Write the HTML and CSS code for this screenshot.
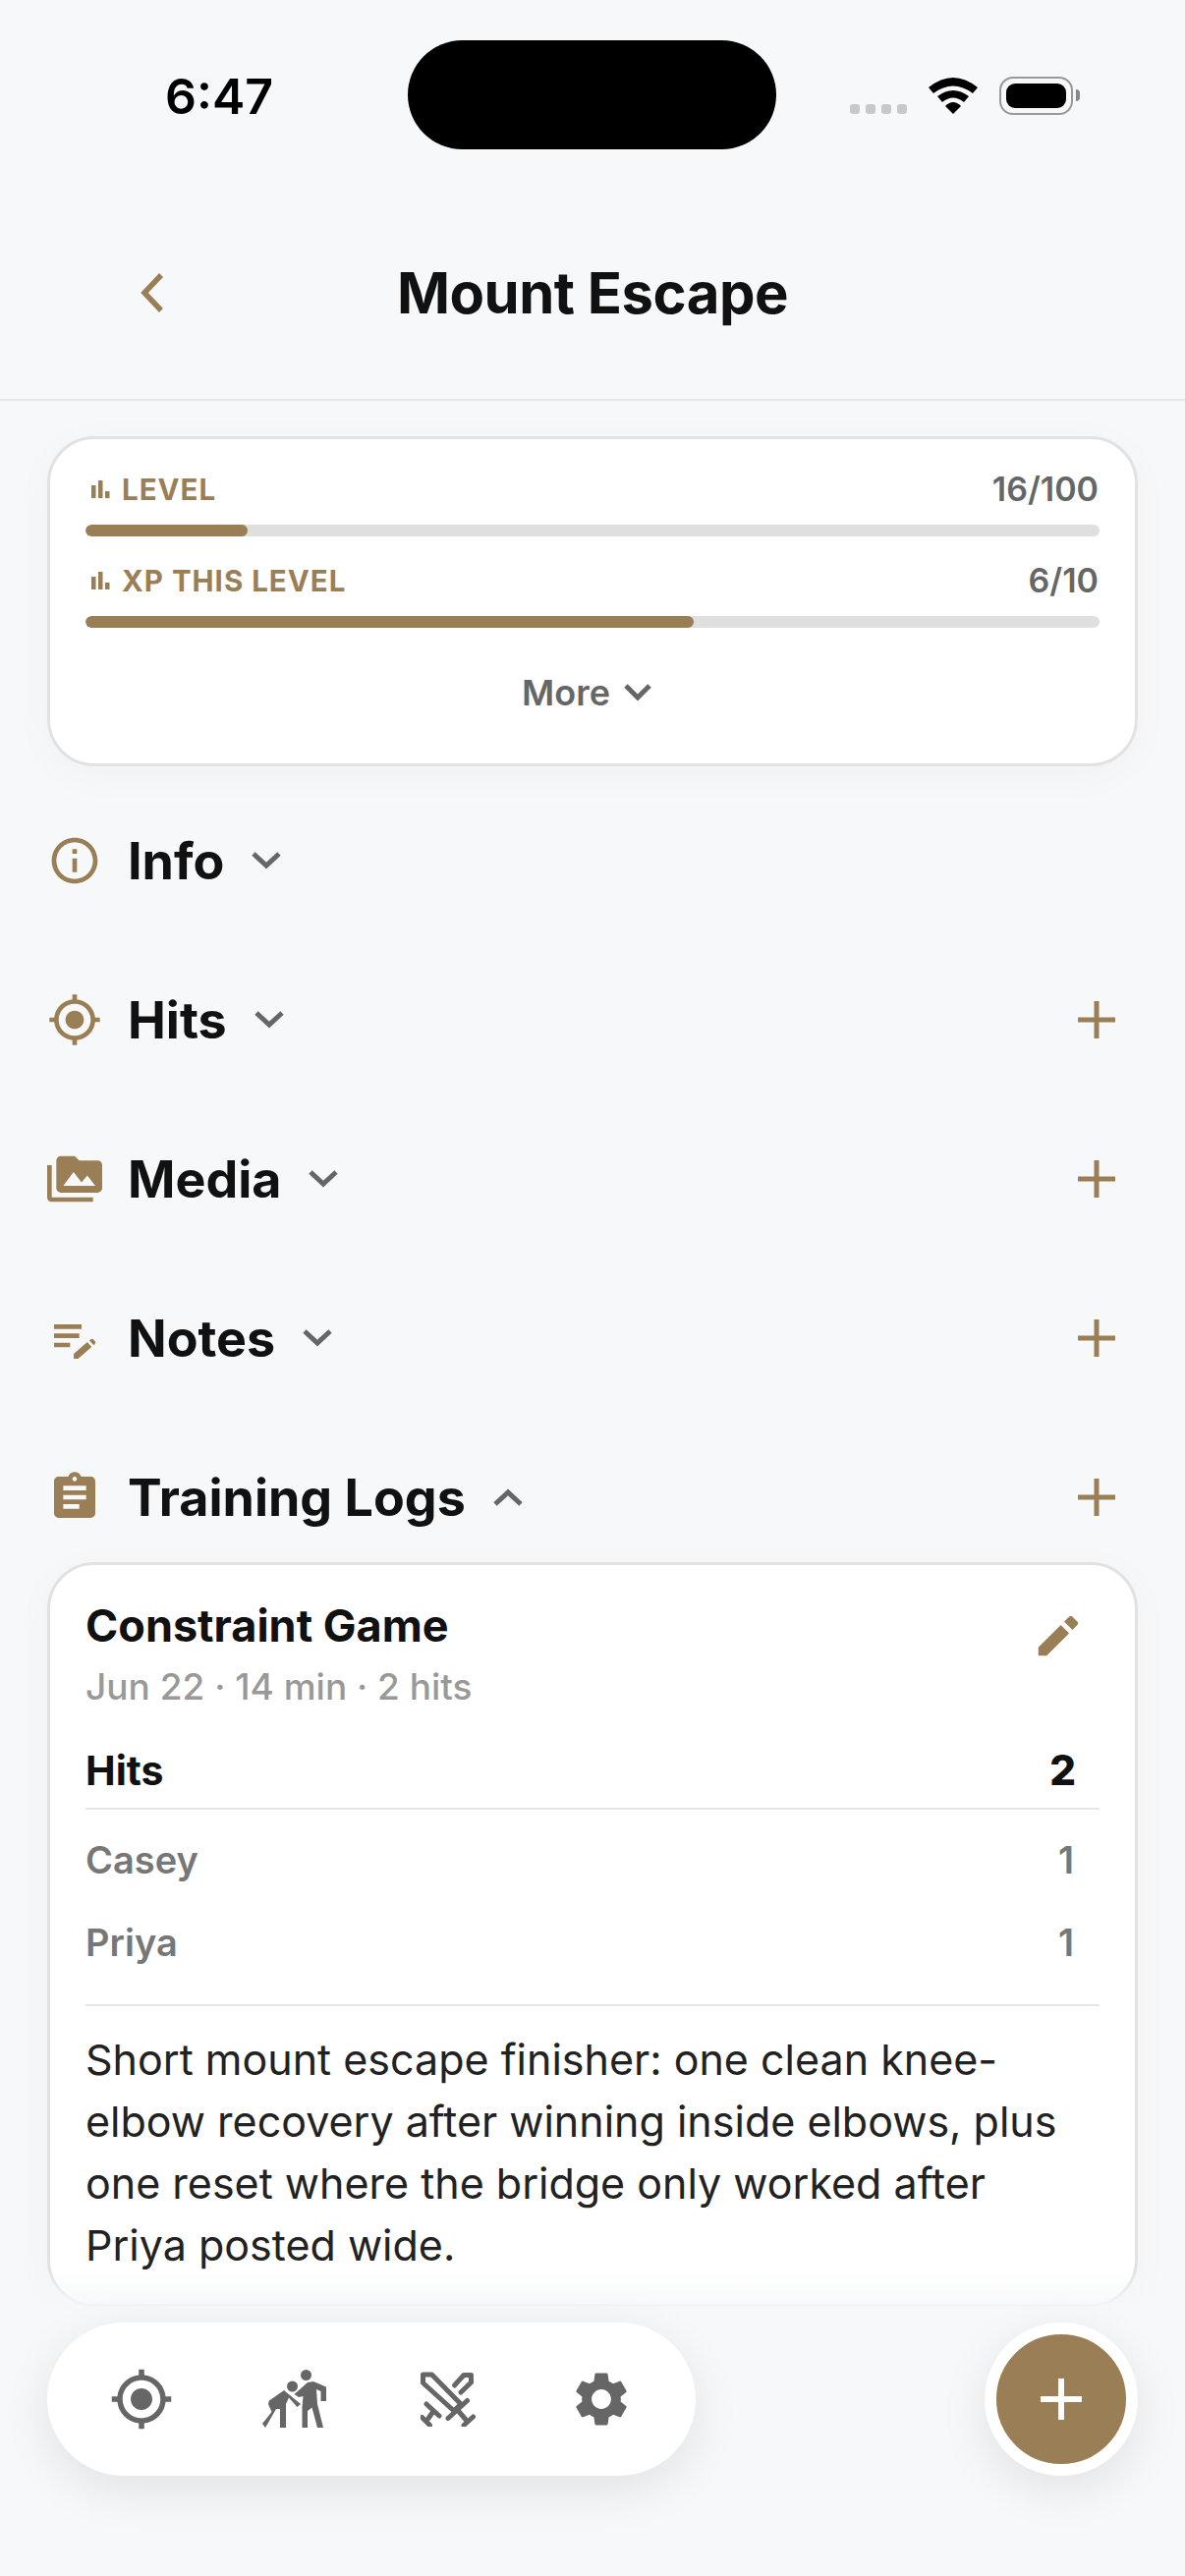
FILE: index.html
```html
<!DOCTYPE html>
<html lang="en">
<head>
    <meta charset="UTF-8">
    <meta name="viewport" content="width=device-width, initial-scale=1.0">
    <title>Mount Escape</title>
    <link rel="stylesheet" href="styles.css">
</head>
<body>
    <div class="status-bar">
        <div class="status-time">6:47</div>
        <div class="island"></div>
        <div class="status-icons">
            <div class="signal"><span></span><span></span><span></span><span></span></div>
            <svg class="wifi" width="50" height="37" viewBox="0 0 50 37"><path d="M0 10Q25-10 50 10L45 16Q25 1 5 16Z"/><path d="M9 19Q25 7 41 19L36 25Q25 16 14 25Z"/><path d="M17 29Q25 21 33 29L25 37Z"/></svg>
            <div class="battery"><div class="battery-fill"></div></div>
            <div class="battery-nub"></div>
        </div>
    </div>

    <header class="top-bar">
        <svg class="back" width="26" height="40" viewBox="0 0 26 40"><path d="M22 2 5 20l17 18"/></svg>
        <h1>Mount Escape</h1>
        <div></div>
    </header>

    <main class="content">
        <section class="card stats">
            <div class="stat-row">
                <span class="stat-label"><svg width="30" height="20" viewBox="0 0 30 20"><rect x="6" y="6" width="4.5" height="13"/><rect x="13" y="1" width="4.5" height="18"/><rect x="20" y="12" width="4.5" height="7"/></svg>LEVEL</span>
                <span class="stat-value">16/100</span>
            </div>
            <div class="bar"><div class="bar-fill" style="width: 16%"></div></div>
            <div class="stat-row second">
                <span class="stat-label"><svg width="30" height="20" viewBox="0 0 30 20"><rect x="6" y="6" width="4.5" height="13"/><rect x="13" y="1" width="4.5" height="18"/><rect x="20" y="12" width="4.5" height="7"/></svg>XP THIS LEVEL</span>
                <span class="stat-value">6/10</span>
            </div>
            <div class="bar"><div class="bar-fill" style="width: 60%"></div></div>
            <div class="more">More <svg width="28" height="18" viewBox="0 0 28 18"><path d="M2 2l12 12L26 2"/></svg></div>
        </section>

        <div class="sections">
            <div class="section-row">
                <svg class="section-icon" viewBox="0 0 24 24"><path d="M11 7h2v2h-2zm0 4h2v6h-2zm1-9C6.48 2 2 6.48 2 12s4.48 10 10 10 10-4.48 10-10S17.52 2 12 2zm0 18c-4.41 0-8-3.59-8-8s3.59-8 8-8 8 3.59 8 8-3.59 8-8 8z"/></svg>
                <h2>Info</h2>
                <svg class="caret" width="30" height="18" viewBox="0 0 30 18"><path d="M2 2l13 12L28 2"/></svg>
            </div>
            <div class="section-row">
                <svg class="section-icon" viewBox="0 0 24 24"><path d="M12 8c-2.21 0-4 1.79-4 4s1.79 4 4 4 4-1.79 4-4-1.79-4-4-4zm8.94 3A8.994 8.994 0 0 0 13 3.06V1h-2v2.06A8.994 8.994 0 0 0 3.06 11H1v2h2.06A8.994 8.994 0 0 0 11 20.94V23h2v-2.06A8.994 8.994 0 0 0 20.94 13H23v-2h-2.06zM12 19c-3.87 0-7-3.13-7-7s3.13-7 7-7 7 3.13 7 7-3.13 7-7 7z"/></svg>
                <h2>Hits</h2>
                <svg class="caret" width="30" height="18" viewBox="0 0 30 18"><path d="M2 2l13 12L28 2"/></svg>
                <svg class="add" width="40" height="40" viewBox="0 0 40 40"><path d="M20 1v38M1 20h38"/></svg>
            </div>
            <div class="section-row">
                <svg class="section-icon" viewBox="0 0 24 24"><path d="M2 6H0v14c0 1.1.9 2 2 2h18v-2H2V6zm20-2h-8l-2-2H6c-1.1 0-1.99.9-1.99 2L4 16c0 1.1.9 2 2 2h16c1.1 0 2-.9 2-2V6c0-1.1-.9-2-2-2zM7 15l4.5-6 3.5 4.51 2.5-3.01L21 15H7z"/></svg>
                <h2>Media</h2>
                <svg class="caret" width="30" height="18" viewBox="0 0 30 18"><path d="M2 2l13 12L28 2"/></svg>
                <svg class="add" width="40" height="40" viewBox="0 0 40 40"><path d="M20 1v38M1 20h38"/></svg>
            </div>
            <div class="section-row">
                <svg class="section-icon" viewBox="0 0 24 24"><path d="M3 10h11v2H3zM3 6h12v2H3zM3 14h7v2H3zM11.6 21h1.9l5.9-5.1-1.9-2.2-5.9 5.2zM20.3 15.1l.5-.5c.4-.4.4-.9 0-1.3l-.6-.7c-.4-.4-.9-.4-1.3 0l-.5.5z"/></svg>
                <h2>Notes</h2>
                <svg class="caret" width="30" height="18" viewBox="0 0 30 18"><path d="M2 2l13 12L28 2"/></svg>
                <svg class="add" width="40" height="40" viewBox="0 0 40 40"><path d="M20 1v38M1 20h38"/></svg>
            </div>
            <div class="section-row">
                <svg class="section-icon" viewBox="0 0 24 24"><path d="M19 3h-4.18C14.4 1.84 13.3 1 12 1c-1.3 0-2.4.84-2.82 2H5c-1.1 0-2 .9-2 2v14c0 1.1.9 2 2 2h14c1.1 0 2-.9 2-2V5c0-1.1-.9-2-2-2zm-7 0c.55 0 1 .45 1 1s-.45 1-1 1-1-.45-1-1 .45-1 1-1zm2 14H7v-2h7v2zm3-4H7v-2h10v2zm0-4H7V7h10v2z"/></svg>
                <h2>Training Logs</h2>
                <svg class="caret" width="30" height="18" viewBox="0 0 30 18"><path d="M2 16L15 4l13 12"/></svg>
                <svg class="add" width="40" height="40" viewBox="0 0 40 40"><path d="M20 1v38M1 20h38"/></svg>
            </div>
        </div>

        <article class="card log">
            <div class="log-head">
                <h3>Constraint Game</h3>
                <svg class="log-edit" width="54" height="54" viewBox="0 0 24 24"><path d="M3 17.25V21h3.75L16.9 10.85l-3.75-3.75L3 17.25zM20.71 7.04c.39-.39.39-1.02 0-1.41l-2.34-2.34c-.39-.39-1.02-.39-1.41 0l-2.3 2.3 3.75 3.75 2.3-2.3z"/></svg>
            </div>
            <div class="log-meta">Jun 22 · 14 min · 2 hits</div>
            <div class="hits-total"><span>Hits</span><span class="hits-count">2</span></div>
            <div class="hits-list">
                <div class="hit-row"><span>Casey</span><span>1</span></div>
                <div class="hit-row"><span>Priya</span><span>1</span></div>
            </div>
            <p class="log-text">Short mount escape finisher: one clean knee-elbow recovery after winning inside elbows, plus one reset where the bridge only worked after Priya posted wide.</p>
        </article>
    </main>

    <div class="fade"></div>

    <nav class="dock">
        <svg class="tab" width="66" height="66" viewBox="0 0 24 24"><path d="M12 8c-2.21 0-4 1.79-4 4s1.79 4 4 4 4-1.79 4-4-1.79-4-4-4zm8.94 3A8.994 8.994 0 0 0 13 3.06V1h-2v2.06A8.994 8.994 0 0 0 3.06 11H1v2h2.06A8.994 8.994 0 0 0 11 20.94V23h2v-2.06A8.994 8.994 0 0 0 20.94 13H23v-2h-2.06zM12 19c-3.87 0-7-3.13-7-7s3.13-7 7-7 7 3.13 7 7-3.13 7-7 7z"/></svg>
        <svg class="tab" width="66" height="60" viewBox="0 0 66 60"><circle cx="44.5" cy="5.5" r="5.5"/><circle cx="30.5" cy="17" r="5.5"/><path d="M46 13 52 12 65 17.5V32H59.5V22L55 20 56 35 62 59H56L50.5 38.5 46 42V59H40.5V38L41.5 27 37 28 32.5 25Z"/><path d="M22 21 39 35 35.5 38 27 28.5 24 35V59H18V40H14L3 59 0 55 9.5 43 6 35 7 31.5Z"/></svg>
        <svg class="tab swords" width="56" height="56" viewBox="0 0 56 56"><path d="M2.5 3H11.5L41 33 34 40 2.5 11.5Z"/><path d="M28 47.5 47.5 29.5M38 39.5 47.5 50.5M44 54.5 53.5 46"/><path d="M34.5 14 44 3.5H51.5V11L41 21"/><path d="M6 33 19 45M12.5 41 8 47.5M1.5 46.5 9.5 54.5"/></svg>
        <svg class="tab" width="66" height="66" viewBox="0 0 24 24"><path d="M19.14 12.94c.04-.3.06-.61.06-.94 0-.32-.02-.64-.07-.94l2.03-1.58a.49.49 0 0 0 .12-.61l-1.92-3.32a.488.488 0 0 0-.59-.22l-2.39.96c-.5-.38-1.03-.7-1.62-.94l-.36-2.54a.484.484 0 0 0-.48-.41h-3.84c-.24 0-.43.17-.47.41l-.36 2.54c-.59.24-1.13.57-1.62.94l-2.39-.96c-.22-.08-.47 0-.59.22L2.74 8.87c-.12.21-.08.47.12.61l2.03 1.58c-.05.3-.09.63-.09.94s.02.64.07.94l-2.03 1.58a.49.49 0 0 0-.12.61l1.92 3.32c.12.22.37.29.59.22l2.39-.96c.5.38 1.03.7 1.62.94l.36 2.54c.05.24.24.41.48.41h3.84c.24 0 .44-.17.47-.41l.36-2.54c.59-.24 1.13-.56 1.62-.94l2.39.96c.22.08.47 0 .59-.22l1.92-3.32c.12-.22.07-.47-.12-.61l-2.01-1.58zM12 15.6c-1.98 0-3.6-1.62-3.6-3.6s1.62-3.6 3.6-3.6 3.6 1.62 3.6 3.6-1.62 3.6-3.6 3.6z"/></svg>
    </nav>

    <button class="fab"><svg width="42" height="42" viewBox="0 0 42 42"><path d="M21 0v42M0 21h42"/></svg></button>
</body>
</html>
```

FILE: styles.css
```css
* {
    box-sizing: border-box;
}

body {
    position: relative;
    width: 1206px;
    height: 2622px;
    margin: 0;
    overflow: hidden;
    background-color: #f7f8fa;
    color: #111;
    font-family: Inter, "Liberation Sans", sans-serif;
}

/* status bar */
.status-bar {
    display: flex;
    align-items: flex-start;
    height: 190px;
    padding: 41px 0 0 168px;
}

.status-time {
    width: 247px;
    margin-top: 29px;
    font-size: 50px;
    line-height: 56px;
    font-weight: 600;
    color: #000;
}

.island {
    width: 375px;
    height: 111px;
    border-radius: 56px;
    background-color: #000;
}

.status-icons {
    display: flex;
    align-items: flex-start;
    margin: 37px 0 0 75px;
}

.signal {
    display: flex;
    gap: 6px;
    margin: 28px 22px 0 0;
}

.signal span {
    width: 10px;
    height: 10px;
    border-radius: 3px;
    background-color: #c8c8c8;
}

.wifi {
    margin: 1px 22px 0 0;
}

.battery {
    width: 75px;
    height: 39px;
    padding: 5px;
    border: 2px solid #999;
    border-radius: 14px;
}

.battery-fill {
    height: 100%;
    border-radius: 9px;
    background-color: #000;
}

.battery-nub {
    width: 4px;
    height: 12px;
    margin: 13px 0 0 3px;
    border-radius: 0 6px 6px 0;
    background-color: #888;
}

/* header */
.top-bar {
    display: grid;
    grid-template-columns: 1fr auto 1fr;
    align-items: center;
    height: 218px;
    padding: 0 142px;
    border-bottom: 2px solid #e6e7e9;
}

.top-bar h1 {
    margin: 0;
    font-size: 58px;
    font-weight: 700;
    letter-spacing: -0.5px;
}

.back path {
    fill: none;
    stroke: #9a7f56;
    stroke-width: 5.5px;
}

/* main column */
.content {
    padding: 36px 48px 0;
}

.card {
    border: 3px solid #e2e2e2;
    border-radius: 48px;
    background-color: #fff;
    box-shadow: 0 8px 40px rgba(0, 0, 0, 0.03);
}

.stats {
    height: 336px;
    padding: 32px 36px 0;
}

.stat-row {
    display: flex;
    justify-content: space-between;
    align-items: center;
    height: 37px;
    margin-bottom: 18px;
}

.stat-row.second {
    margin-top: 26px;
}

.stat-label {
    display: flex;
    align-items: center;
    gap: 7px;
    font-size: 29.5px;
    font-weight: 700;
    letter-spacing: 1px;
    color: #9a7f56;
}

.stat-label rect {
    fill: #9a7f56;
}

.stat-value {
    margin-right: 1px;
    font-size: 34px;
    font-weight: 600;
    color: #666;
}

.bar {
    height: 12px;
    border-radius: 6px;
    background-color: #dfdfdf;
    overflow: hidden;
}

.bar-fill {
    height: 100%;
    border-radius: 6px;
    background-color: #9a7f56;
}

.more {
    display: flex;
    justify-content: center;
    align-items: center;
    gap: 14px;
    height: 40px;
    margin-top: 46px;
    padding-right: 12px;
    font-size: 36px;
    font-weight: 600;
    color: #666;
}

.more path,
.caret path {
    fill: none;
    stroke: #666;
    stroke-width: 5px;
}

/* collapsible section rows */
.sections {
    display: flex;
    flex-direction: column;
    gap: 66px;
    margin-top: 48px;
}

.section-row {
    display: flex;
    align-items: center;
    height: 96px;
}

.section-icon {
    flex: none;
    width: 56px;
    height: 56px;
    margin-right: 26px;
    fill: #9a7f56;
}

.section-row h2 {
    margin: 0 28px 0 0;
    font-size: 52px;
    font-weight: 700;
}

.add {
    margin: 0 22px 0 auto;
}

.add path {
    fill: none;
    stroke: #9a7f56;
    stroke-width: 5px;
}

/* training log card */
.log {
    height: 758px;
    margin-top: 18px;
    padding: 34px 36px 0;
}

.log-head {
    display: flex;
    justify-content: space-between;
    align-items: flex-start;
}

.log-head h3 {
    margin: 0;
    font-size: 45px;
    line-height: 56px;
    font-weight: 700;
}

.log-edit {
    margin: 11px 15px -20px 0;
    fill: #9a7f56;
}

.log-meta {
    margin-top: 12px;
    font-size: 37px;
    line-height: 44px;
    font-weight: 500;
    color: #999;
}

.hits-total {
    display: flex;
    justify-content: space-between;
    margin-top: 39px;
    padding: 0 36px 14px 0;
    border-bottom: 2px solid #e6e6e6;
    font-size: 41px;
    line-height: 48px;
    font-weight: 700;
}

.hits-count {
    margin-right: -12px;
    font-size: 42px;
    font-weight: 800;
}

.hits-list {
    display: flex;
    flex-direction: column;
    gap: 36px;
    margin-top: 27px;
    padding-bottom: 39px;
    border-bottom: 2px solid #e6e6e6;
}

.hit-row {
    display: flex;
    justify-content: space-between;
    padding-right: 26px;
    font-size: 38px;
    line-height: 48px;
    font-weight: 600;
    color: #777;
}

.log-text {
    margin: 0;
    padding: 23px 20px 0 0;
    font-size: 43px;
    line-height: 63px;
    color: #222;
}

/* bottom overlay */
.fade {
    position: absolute;
    left: 0;
    right: 0;
    bottom: 0;
    height: 313px;
    background: linear-gradient(rgba(247, 248, 250, 0), rgba(247, 248, 250, 0.92) 40px, #f7f8fa 70px);
}

.dock {
    position: absolute;
    left: 48px;
    top: 2364px;
    display: grid;
    grid-template-columns: repeat(4, 156px);
    justify-items: center;
    align-items: center;
    width: 660px;
    height: 156px;
    padding-left: 18px;
    border-radius: 78px;
    background-color: #fff;
    box-shadow: 0 14px 50px rgba(0, 0, 0, 0.09);
}

.tab {
    fill: #666;
}

.swords path {
    fill: none;
    stroke: #666;
    stroke-width: 5px;
    stroke-linecap: round;
    stroke-linejoin: round;
}

.fab {
    position: absolute;
    left: 1002px;
    top: 2364px;
    display: flex;
    justify-content: center;
    align-items: center;
    width: 156px;
    height: 156px;
    padding: 0;
    border: 12px solid #fff;
    border-radius: 50%;
    background-color: #9a7f56;
    box-shadow: 0 14px 50px rgba(0, 0, 0, 0.09);
}

.fab path {
    fill: none;
    stroke: #fff;
    stroke-width: 6px;
}
```
